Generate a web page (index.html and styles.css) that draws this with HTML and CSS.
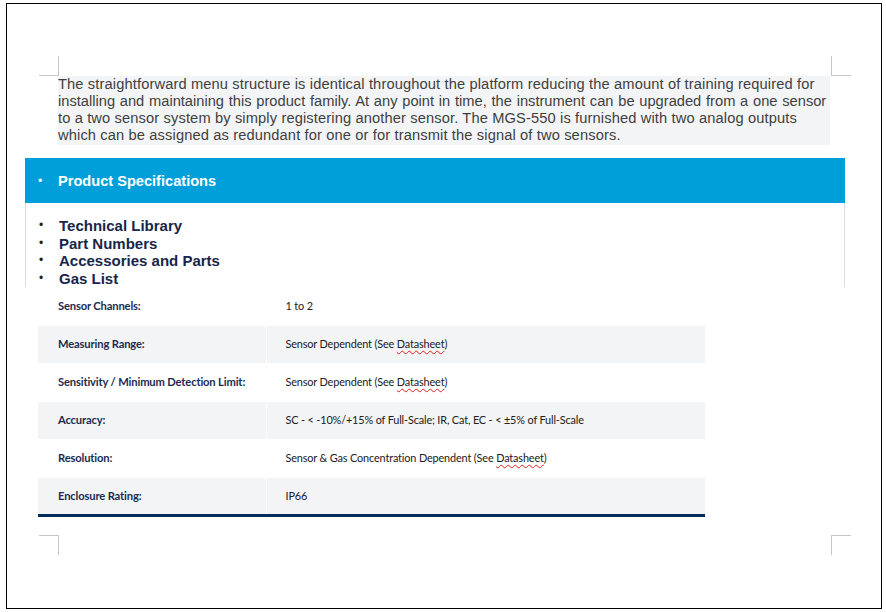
FILE: index.html
```html
<!DOCTYPE html>
<html>
<head>
<meta charset="utf-8">
<link rel="stylesheet" href="styles.css">
</head>
<body>
<div class="page">
  <span class="crop crop-tl"></span>
  <span class="crop crop-tr"></span>
  <span class="crop crop-bl"></span>
  <span class="crop crop-br"></span>
  <div class="doc">
    <p class="intro">The straightforward menu structure is identical throughout the platform reducing the amount of training required for<br><span class="tight">installing and maintaining this product family. At any point in time, the instrument can be upgraded from a one sensor</span><br>to a two sensor system by simply registering another sensor. The MGS-550 is furnished with two analog outputs<br>which can be assigned as redundant for one or for transmit the signal of two sensors.</p>
    <div class="section">
      <ul class="bar">
        <li>Product Specifications</li>
      </ul>
      <ul class="links">
        <li>Technical Library</li>
        <li>Part Numbers</li>
        <li>Accessories and Parts</li>
        <li>Gas List</li>
      </ul>
    </div>
    <table class="specs">
      <tr><th>Sensor Channels:</th><td>1 to 2</td></tr>
      <tr><th>Measuring Range:</th><td>Sensor Dependent (See <span class="spell">Datasheet</span>)</td></tr>
      <tr><th>Sensitivity / Minimum Detection Limit:</th><td>Sensor Dependent (See <span class="spell">Datasheet</span>)</td></tr>
      <tr><th>Accuracy:</th><td>SC - &lt; -10%/+15% of Full-Scale; IR, Cat, EC - &lt; ±5% of Full-Scale</td></tr>
      <tr><th>Resolution:</th><td>Sensor &amp; Gas Concentration Dependent (See <span class="spell">Datasheet</span>)</td></tr>
      <tr><th>Enclosure Rating:</th><td>IP66</td></tr>
    </table>
  </div>
</div>
</body>
</html>
```
FILE: styles.css
```css
html, body {
  margin: 0;
  padding: 0;
  background: #ffffff;
}

.page {
  position: relative;
  margin: 3px 0 0 6px;
  width: 874px;
  height: 604px;
  border: 1px solid #000000;
  background: #ffffff;
  font-family: "Liberation Sans", Arial, sans-serif;
}

.crop {
  position: absolute;
  width: 19px;
  height: 19px;
  border-color: #c6c6c6;
  border-style: solid;
  border-width: 0;
}
.crop-tl { left: 32px; top: 52px; border-right-width: 1px; border-bottom-width: 1px; }
.crop-tr { left: 824px; top: 52px; border-left-width: 1px; border-bottom-width: 1px; }
.crop-bl { left: 32px; top: 531px; border-right-width: 1px; border-top-width: 1px; }
.crop-br { left: 824px; top: 531px; border-left-width: 1px; border-top-width: 1px; }

.doc {
  padding-top: 72px;
}

.intro {
  margin: 0 0 0 51px;
  width: 772px;
  background: #f3f4f6;
  color: #3f3f3f;
  font-size: 14.67px;
  line-height: 17px;
  letter-spacing: 0.13px;
  white-space: nowrap;
  padding-bottom: 1px;
}

.intro .tight {
  letter-spacing: 0;
  word-spacing: 0.7px;
}

.section {
  margin: 13px 0 0 18px;
  width: 820px;
}

.bar, .links {
  list-style: none;
  margin: 0;
  padding: 0;
}

.bar {
  height: 45px;
  background: #009fda;
  color: #ffffff;
  font-weight: bold;
  font-size: 14.6px;
  display: flex;
  align-items: center;
}

.bar li, .links li {
  display: flex;
  align-items: center;
}

.bar li::before, .links li::before {
  content: "•";
  display: inline-block;
  width: 33px;
  padding-left: 13px;
  box-sizing: border-box;
  font-size: 12px;
  font-weight: normal;
}

.links {
  height: 84px;
  box-sizing: border-box;
  padding-top: 14px;
  border-left: 1px solid #d5dfea;
  border-right: 1px solid #d5dfea;
  color: #17264a;
  font-weight: bold;
  font-size: 15px;
  line-height: 17.5px;
}
.links li::before {
  color: #222;
}

.specs {
  margin-left: 31px;
  width: 667px;
  border-collapse: collapse;
  border-bottom: 3px solid #022d5c;
  font-family: Lato, "Liberation Sans", sans-serif;
  font-size: 10.9px;
}

.specs tr {
  height: 38px;
  border-bottom: 1px solid #ffffff;
}

.specs tr:nth-child(even) {
  background: #f3f4f6;
}

.specs th {
  width: 228px;
  box-sizing: border-box;
  text-align: left;
  padding: 0 0 1px 20px;
  color: #1b2b50;
  font-weight: bold;
  font-size: 11.2px;
  letter-spacing: -0.15px;
  border-right: 1px solid #ffffff;
}

.specs td {
  padding: 0 0 1px 19px;
  color: #202020;
  letter-spacing: -0.15px;
}

.spell {
  text-decoration: underline wavy #e02020;
  text-decoration-thickness: 1px;
  text-decoration-skip-ink: none;
  text-underline-offset: 2px;
}
```
